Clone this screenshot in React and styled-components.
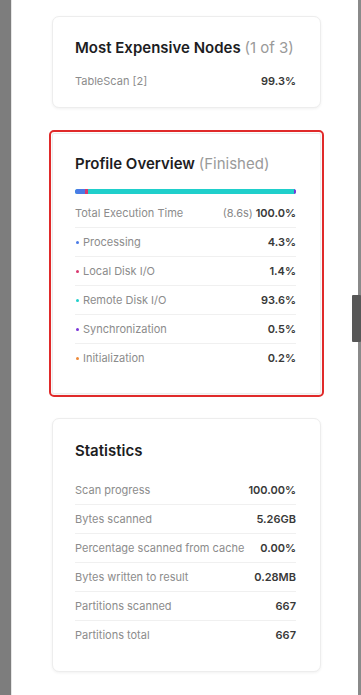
import React from "react";
import styled, { createGlobalStyle } from "styled-components";

const GlobalStyle = createGlobalStyle`
  html, body {
    margin: 0;
    padding: 0;
    background: #ffffff;
  }
  body {
    font-family: Inter, "Noto Sans", "Liberation Sans", sans-serif;
    -webkit-font-smoothing: antialiased;
  }
`;

const nodes = [{ label: "TableScan [2]", value: "99.3%" }];

const profile = [
  { label: "Processing", value: "4.3%", pct: 4.3, color: "#4a7be6" },
  { label: "Local Disk I/O", value: "1.4%", pct: 1.4, color: "#d9386f" },
  { label: "Remote Disk I/O", value: "93.6%", pct: 93.6, color: "#1fcfcb" },
  { label: "Synchronization", value: "0.5%", pct: 0.5, color: "#7a35d8" },
  { label: "Initialization", value: "0.2%", pct: 0.2, color: "#ee8a3a" },
];

const stats = [
  { label: "Scan progress", value: "100.00%" },
  { label: "Bytes scanned", value: "5.26GB" },
  { label: "Percentage scanned from cache", value: "0.00%" },
  { label: "Bytes written to result", value: "0.28MB" },
  { label: "Partitions scanned", value: "667" },
  { label: "Partitions total", value: "667" },
];

const App = () => {
  return (
    <>
      <GlobalStyle />
      <Frame>
        <LeftEdge />
        <Content>
          <Card $top={20} $bottom={12}>
            <Title $gap={8}>
              Most Expensive Nodes <Muted>(1 of 3)</Muted>
            </Title>
            {nodes.map((n) => (
              <Row key={n.label}>
                <Label>{n.label}</Label>
                <Value>{n.value}</Value>
              </Row>
            ))}
          </Card>

          <Card $top={19} $bottom={21} $highlight>
            <Title $gap={14}>
              Profile Overview <Muted>(Finished)</Muted>
            </Title>
            <Bar>
              {profile.map((p) => (
                <Segment
                  key={p.label}
                  $color={p.color}
                  style={{ width: `${p.pct}%` }}
                />
              ))}
            </Bar>
            <Row>
              <Label>Total Execution Time</Label>
              <Value>
                <Muted $small>(8.6s)</Muted> 100.0%
              </Value>
            </Row>
            {profile.map((p) => (
              <Row key={p.label}>
                <Label>
                  <Dot $color={p.color} />
                  {p.label}
                </Label>
                <Value>{p.value}</Value>
              </Row>
            ))}
          </Card>

          <Card $top={21} $bottom={22}>
            <Title $gap={14}>Statistics</Title>
            {stats.map((s) => (
              <Row key={s.label}>
                <Label>{s.label}</Label>
                <Value>{s.value}</Value>
              </Row>
            ))}
          </Card>
        </Content>
        <RightEdge>
          <Thumb />
        </RightEdge>
      </Frame>
    </>
  );
};

const Frame = styled.div`
  display: flex;
  width: 361px;
  height: 695px;
  overflow: hidden;
  background: #ffffff;
`;

const LeftEdge = styled.div`
  width: 11px;
  flex-shrink: 0;
  background: #7d7d7d;
  border-right: 1px solid #e6e6e6;
`;

const Content = styled.div`
  flex: 1;
  display: flex;
  flex-direction: column;
  gap: 24px;
  padding: 16px 0 0 40px;
`;

const Card = styled.div`
  width: 269px;
  box-sizing: border-box;
  padding: ${(p) => p.$top}px 24px ${(p) => p.$bottom}px 22px;
  background: #ffffff;
  border: 1px solid #ededed;
  border-radius: 7px;
  box-shadow: 0 1px 3px rgba(0, 0, 0, 0.06);
  ${(p) =>
    p.$highlight &&
    `
    margin-top: 1px;
    border-radius: 2px;
    outline: 2px solid #e02a2a;
    outline-offset: 1px;
  `}
`;

const Title = styled.div`
  font-size: 15px;
  line-height: 22px;
  font-weight: 600;
  color: #1d1d1f;
  margin-bottom: ${(p) => p.$gap}px;
  white-space: nowrap;
`;

const Muted = styled.span`
  font-weight: 400;
  color: ${(p) => (p.$small ? "#888888" : "#9a9a9a")};
`;

const Bar = styled.div`
  display: flex;
  height: 5px;
  border-radius: 3px;
  overflow: hidden;
  margin-bottom: 5px;
  background: #1fcfcb;
`;

const Segment = styled.div`
  height: 100%;
  background: ${(p) => p.$color};
`;

const Row = styled.div`
  display: flex;
  align-items: center;
  justify-content: space-between;
  height: 28px;
  font-size: 11px;
  border-bottom: 1px solid #f0f0f0;
  &:last-child {
    border-bottom: none;
  }
`;

const Label = styled.span`
  display: flex;
  align-items: center;
  color: #8c8c8c;
  white-space: nowrap;
`;

const Dot = styled.span`
  width: 3px;
  height: 3px;
  border-radius: 50%;
  margin: 0 4px 0 1px;
  background: ${(p) => p.$color};
`;

const Value = styled.span`
  color: #383838;
  font-weight: 600;
  white-space: nowrap;
`;

const RightEdge = styled.div`
  position: relative;
  width: 9px;
  flex-shrink: 0;
  border-right: 3px solid #8a8a8a;
  box-sizing: border-box;
`;

const Thumb = styled.div`
  position: absolute;
  top: 295px;
  left: 0;
  width: 9px;
  height: 47px;
  background: #575757;
  border-radius: 1px;
`;

export default App;
